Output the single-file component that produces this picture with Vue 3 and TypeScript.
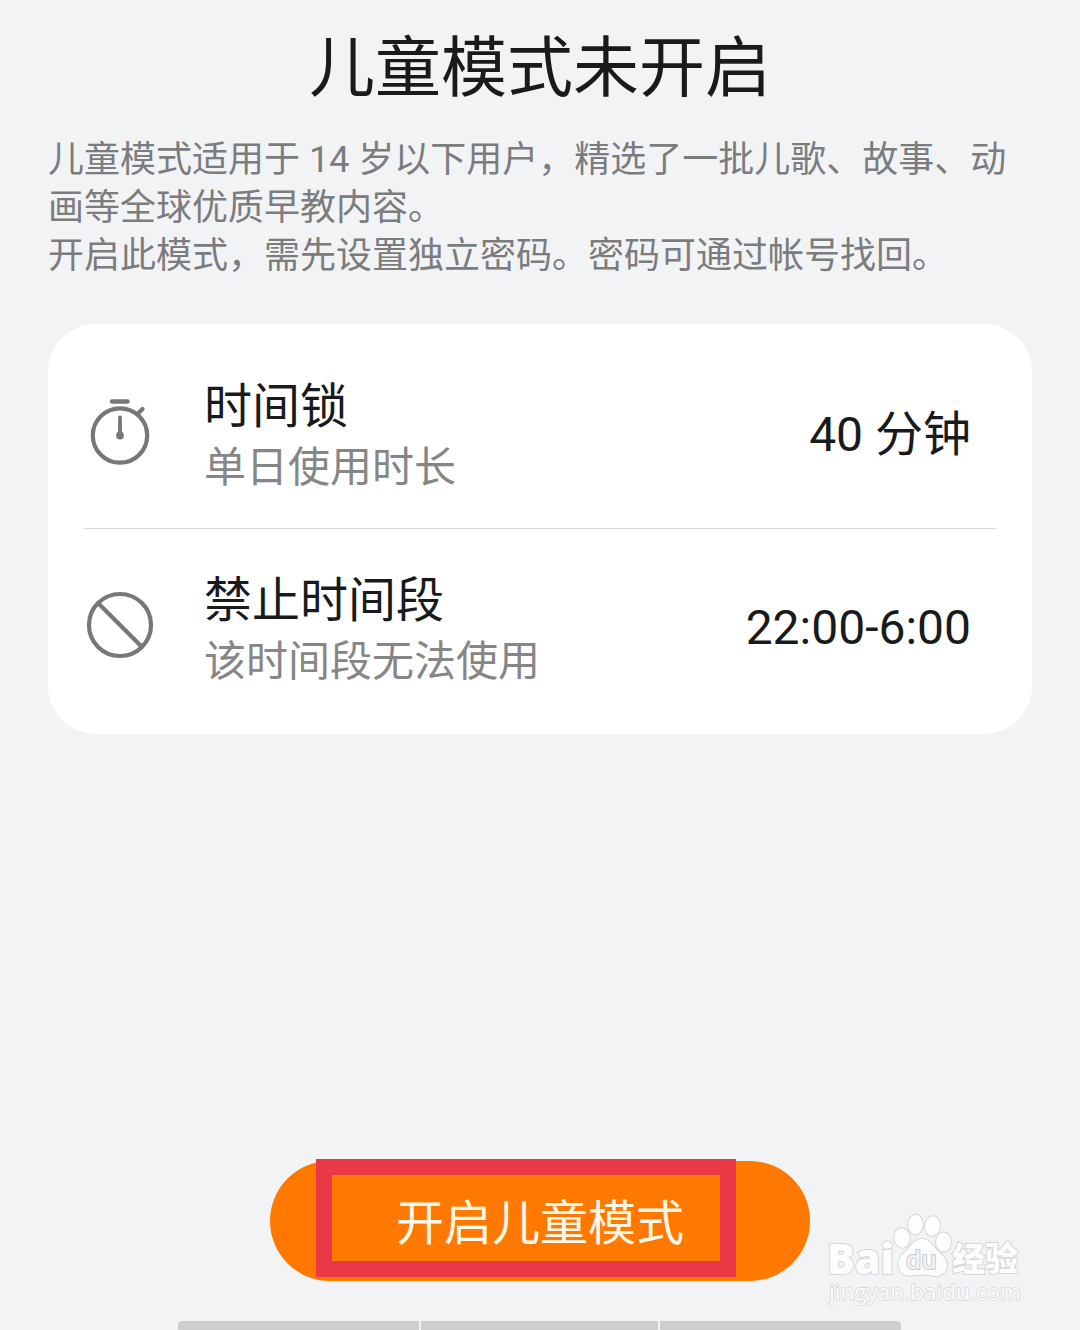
<script setup lang="ts">
interface Rule {
  icon: 'timer' | 'forbidden'
  title: string
  hint: string
  value: string
}

const rules: Rule[] = [
  { icon: 'timer', title: '时间锁', hint: '单日使用时长', value: '40 分钟' },
  { icon: 'forbidden', title: '禁止时间段', hint: '该时间段无法使用', value: '22:00-6:00' },
]

const intro: string[] = [
  '儿童模式适用于 14 岁以下用户，精选了一批儿歌、故事、动',
  '画等全球优质早教内容。',
  '开启此模式，需先设置独立密码。密码可通过帐号找回。',
]
</script>

<template>
  <main class="screen">
    <h1 class="title">儿童模式未开启</h1>
    <div class="intro">
      <div v-for="line in intro" :key="line">{{ line }}</div>
    </div>

    <section class="card">
      <div v-for="rule in rules" :key="rule.title" class="rule">
        <svg v-if="rule.icon === 'timer'" class="icon" viewBox="0 0 72 72" fill="none" stroke="#777" stroke-linecap="round">
          <circle cx="36" cy="39.500" r="27.2" stroke-width="4.2" />
          <path d="M28 5.500H43.500" stroke-width="4.4" />
          <path d="M54.500 17L58.500 13" stroke-width="4.2" />
          <path d="M36 21.500V38" stroke-width="3.8" />
          <circle cx="36" cy="39.500" r="3.9" fill="#777" stroke="none" />
        </svg>
        <svg v-else class="icon" viewBox="0 0 72 72" fill="none" stroke="#777">
          <circle cx="36" cy="35" r="31" stroke-width="4.2" />
          <path d="M14 13L58 57" stroke-width="4.2" />
        </svg>
        <div class="label">
          <div class="name">{{ rule.title }}</div>
          <div class="hint">{{ rule.hint }}</div>
        </div>
        <div class="value">{{ rule.value }}</div>
      </div>
    </section>

    <div class="action">
      <button class="start">开启儿童模式</button>
      <div class="highlight"></div>
    </div>

    <div class="dock"><span></span><span></span><span></span></div>

    <svg class="watermark" viewBox="0 0 230 130">
      <g class="brand">
        <text x="17" y="74" font-size="43" textLength="67" lengthAdjust="spacingAndGlyphs">Bai</text>
        <ellipse cx="92" cy="38" rx="7.8" ry="9.8" transform="rotate(-10 92 38)" />
        <ellipse cx="105.500" cy="24.500" rx="7.300" ry="9.800" />
        <ellipse cx="122.500" cy="26" rx="7.500" ry="9.800" transform="rotate(10 122.500 26)" />
        <ellipse cx="133.500" cy="42" rx="7.500" ry="9.500" />
        <path d="M112 39C104 39 101 46 96 51C90 56 87 61 89 68C91 75 98 77 105 75Q112 74 119 75C127 78 135 75 137 67C138 60 133 56 128 51C123 46 120 39 112 39Z" />
        <text class="du" x="96" y="69" font-size="25" textLength="31" lengthAdjust="spacingAndGlyphs">du</text>
        <text class="zh" x="142" y="71" font-size="33" textLength="66" lengthAdjust="spacingAndGlyphs">经验</text>
      </g>
      <text class="site" x="19" y="100" font-size="22" textLength="192" lengthAdjust="spacingAndGlyphs">jingyan.baidu.com</text>
    </svg>
  </main>
</template>

<style>
body {
  margin: 0;
  background: #f2f3f5;
}
</style>

<style scoped>
.screen {
  position: relative;
  box-sizing: border-box;
  width: 1080px;
  height: 1330px;
  padding: 22px 48px 0;
  display: flex;
  flex-direction: column;
  overflow: hidden;
  background: #f2f3f5;
  color: #191a1c;
  font-family: Roboto, "Noto Sans CJK SC", sans-serif;
}

.title {
  margin: 0;
  font-size: 66px;
  line-height: 94px;
  font-weight: 400;
  text-align: center;
}

.intro {
  margin-top: 20px;
  font-size: 36px;
  line-height: 48px;
  color: #7b7c7e;
  white-space: nowrap;
}

.card {
  box-sizing: border-box;
  height: 410px;
  margin-top: 44px;
  padding: 12px 36px;
  border-radius: 48px;
  background: #fff;
}

.rule {
  box-sizing: border-box;
  height: 193px;
  display: flex;
  align-items: center;
  padding-right: 25px;
}

.rule:first-child {
  border-bottom: 1px solid #d9d9da;
}

.icon {
  width: 72px;
  height: 72px;
  flex: none;
}

.label {
  margin-left: 48px;
  padding-top: 8px;
  flex: 1;
}

.name {
  font-size: 48px;
  line-height: 64px;
}

.hint {
  font-size: 42px;
  line-height: 58px;
  color: #868686;
}

.value {
  padding-top: 5px;
  font-size: 48px;
  line-height: 64px;
  white-space: nowrap;
}

.action {
  position: relative;
  align-self: center;
  width: 540px;
  margin-top: 427px;
}

.start {
  box-sizing: border-box;
  display: block;
  width: 100%;
  height: 120px;
  padding: 6px 0 0;
  border: 0;
  border-radius: 60px;
  background: #ff7800;
  color: #fff8e8;
  font: inherit;
  font-size: 48px;
  line-height: 114px;
}

.highlight {
  position: absolute;
  box-sizing: border-box;
  left: 46px;
  top: -2px;
  width: 420px;
  height: 118px;
  border: 16px solid #e93846;
}

.dock {
  width: 723px;
  height: 9px;
  margin: 40px 0 0 130px;
  display: flex;
  gap: 2px;
  border-radius: 4px 4px 0 0;
  overflow: hidden;
}

.dock span {
  flex: 241;
  background: #cecfd1;
}

.dock span:nth-child(2) {
  flex: 237;
}

.watermark {
  position: absolute;
  left: 810px;
  top: 1200px;
  width: 230px;
  height: 130px;
  fill: #fcfdfd;
  stroke: #d5d6d8;
  stroke-width: 2px;
  paint-order: stroke;
  stroke-linejoin: round;
  font-family: "Open Sans", "Noto Sans CJK SC", sans-serif;
}

.brand text {
  font-weight: 800;
}

.brand .du {
  font-weight: 600;
  fill: #f0f1f2;
  stroke: #cbccce;
}

.site {
  stroke-width: 1.5px;
}
</style>
